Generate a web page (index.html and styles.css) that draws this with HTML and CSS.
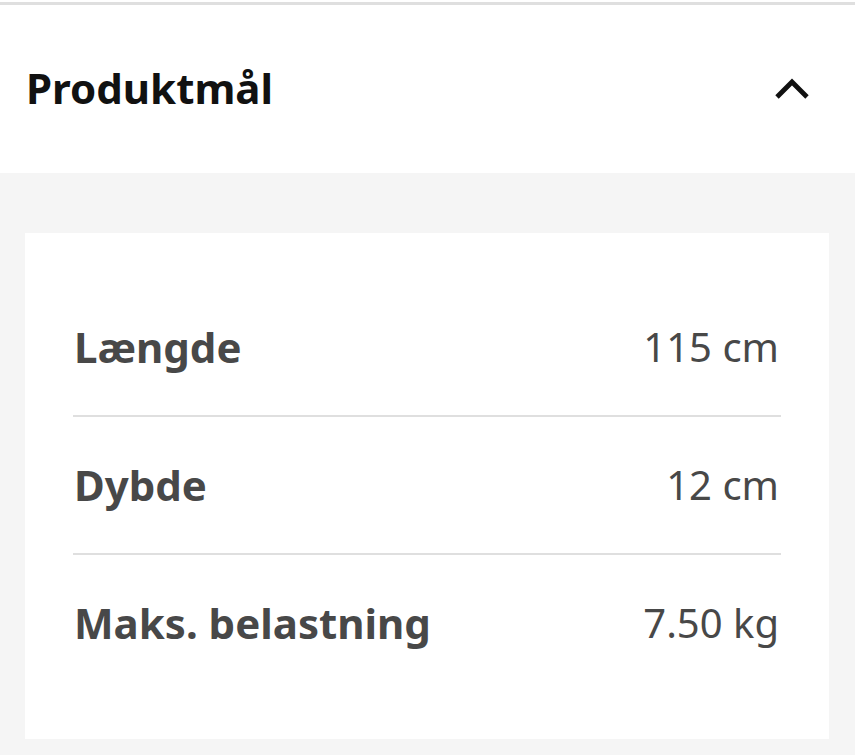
FILE: index.html
```html
<!DOCTYPE html>
<html lang="da">
<head>
<meta charset="utf-8">
<title>Produktmål</title>
<link rel="stylesheet" href="styles.css">
</head>
<body>
<div class="page">
  <header class="acc-header">
    <h2 class="acc-title">Produktmål</h2>
    <button class="acc-toggle" aria-label="Skjul">
      <svg width="36" height="22" viewBox="0 0 36 22"><path d="M3 19 L18 4 L33 19" fill="none" stroke="#111" stroke-width="4.8" stroke-linecap="butt" stroke-linejoin="miter"/></svg>
    </button>
  </header>
  <section class="acc-body">
    <div class="card">
      <dl class="dims">
        <div class="row"><dt>Længde</dt><dd>115 cm</dd></div>
        <div class="row"><dt>Dybde</dt><dd>12 cm</dd></div>
        <div class="row"><dt>Maks. belastning</dt><dd>7.50 kg</dd></div>
      </dl>
    </div>
  </section>
</div>
</body>
</html>
```
FILE: styles.css
```css
html, body {
  margin: 0;
  padding: 0;
  background: #f5f5f5;
}
body {
  font-family: "Noto Sans", "Open Sans", sans-serif;
  width: 855px;
  height: 755px;
  overflow: hidden;
}
.page {
  display: flex;
  flex-direction: column;
  height: 755px;
  padding-top: 2px;
  box-sizing: border-box;
  background: #ffffff;
}
.acc-header {
  border-top: 3px solid #dfdfdf;
  height: 171px;
  flex: none;
  box-sizing: border-box;
  display: flex;
  align-items: center;
  justify-content: space-between;
  padding: 0 45px 0 26px;
  background: #fff;
}
.acc-title {
  margin: 0;
  font-size: 42px;
  font-weight: 700;
  color: #111111;
  line-height: 1;
  margin-top: -2px;
}
.acc-toggle {
  background: none;
  border: 0;
  padding: 0;
  width: 36px;
  height: 22px;
  display: flex;
  margin-top: -1px;
}
.acc-body {
  flex: 1;
  background: #f5f5f5;
  padding: 60px 26px 0 25px;
}
.card {
  background: #ffffff;
  padding: 46px 48px 48px;
}
.dims {
  margin: 0;
}
.row {
  display: flex;
  justify-content: space-between;
  align-items: center;
  padding: 38px 0;
  line-height: 60px;
  font-size: 40px;
  color: #484848;
  border-bottom: 2px solid #dfdfdf;
}
.row:last-child {
  border-bottom: 0;
}
.row dt {
  font-weight: 700;
  font-size: 42px;
  padding-left: 1px;
}
.row dd {
  margin: 0;
  font-weight: 400;
  padding-right: 2px;
}
```
